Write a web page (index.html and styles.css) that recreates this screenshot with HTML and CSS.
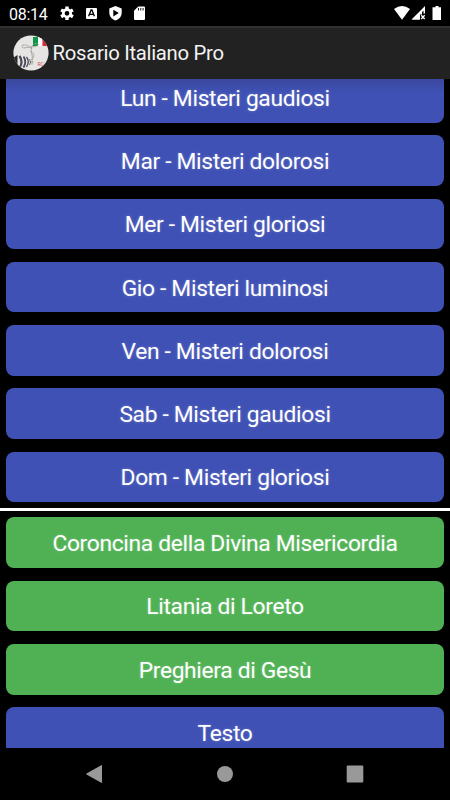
FILE: index.html
```html
<!DOCTYPE html>
<html lang="it">
<head>
    <meta charset="UTF-8">
    <meta name="viewport" content="width=device-width, initial-scale=1.0">
    <title>Rosario Italiano Pro</title>
    <link rel="stylesheet" href="styles.css">
</head>
<body>
    <div class="status-bar">
        <span class="clock">08:14</span>
        <svg class="status-icons" width="96" height="26" viewBox="0 0 96 26" fill="#fff">
            <!-- impostazioni -->
            <g transform="translate(12 13.3)">
                <circle r="3.7" fill="none" stroke="#fff" stroke-width="2.7"/>
                <g stroke="#fff" stroke-width="3.4">
                    <path d="M0-6.8V-4M0 6.8V4"/>
                    <path d="M0-6.8V-4M0 6.8V4" transform="rotate(60)"/>
                    <path d="M0-6.8V-4M0 6.8V4" transform="rotate(120)"/>
                </g>
            </g>
            <!-- tastiera -->
            <rect x="31" y="8" width="11" height="11" rx="1"/>
            <path d="M33.6 16.3L36.1 10h.8l2.5 6.3M34.6 14.3h3.8" fill="none" stroke="#000" stroke-width="1.3"/>
            <!-- protezione -->
            <path d="M60.5 6l6.2 2.5v4.3c0 3.5-2.5 6.5-6.2 7.7-3.7-1.2-6.2-4.2-6.2-7.7V8.5z"/>
            <path d="M58.3 9.7v6.8l5.5-3.4z" fill="#000"/>
            <!-- scheda sd -->
            <path d="M83.3 6.5H89q1 0 1 1V19q0 1-1 1h-9q-1 0-1-1v-8.3z"/>
            <path d="M83.5 8v2.5M85.8 8v2.5M88.1 8v2.5" stroke="#000" stroke-width=".9"/>
        </svg>
        <svg class="signal-icons" width="56" height="26" viewBox="0 0 56 26" fill="#fff">
            <path d="M0 9q8-6 16 0l-8 10.7z"/>
            <path d="M17.5 19.5L31 6v7.5h-1.5v-3L22.5 18h3v1.5z"/>
            <path d="M18 19.5l10-9.5v4.5h-2v5z"/>
            <path d="M27.2 15.3l3.5 3.7M30.7 15.3l-3.5 3.7" stroke="#fff" stroke-width="1.3"/>
            <path d="M41.5 6h3v1.3H47V20h-8.500V7.300h3z"/>
        </svg>
    </div>

    <header class="app-bar">
        <svg class="logo" width="36" height="36" viewBox="0 0 36 36">
            <defs>
                <clipPath id="disc"><circle cx="18" cy="18" r="17.6"/></clipPath>
            </defs>
            <g clip-path="url(#disc)">
                <rect width="36" height="36" fill="#e6e5e3"/>
                <path d="M20 2h5v9h-5z" fill="#0b984a"/>
                <path d="M25 2h4.5v9H25z" fill="#fff"/>
                <path d="M29.5 2H36v9h-6.5z" fill="#d52b38"/>
                <g fill="none" stroke="#99948c" stroke-width="1" stroke-dasharray="1.3 .5">
                    <path d="M19 14C15 9 8 9 9 12c1 2 6 0 9 0 4 0 9-2 7-3-2-2-7 1-7 6 0 4 2 4 1 10"/>
                    <path d="M18 16q5 4 1 8M17 27h4M19 24v6"/>
                </g>
                <path d="M0 23l4.5-3v14L0 31z" fill="#26272c"/>
                <g fill="none" stroke="#484b57">
                    <path d="M6.5 21q4 5.500 0 12" stroke-width="2.2"/>
                    <path d="M10.5 21.500q3.500 5 0 11" stroke-width="1.8"/>
                    <path d="M13.5 22q3.500 4.500 0 10" stroke-width="1.3"/>
                    <path d="M16.5 24q2 3 0 6" stroke-width=".8"/>
                </g>
                <text class="logo-mark" x="24.5" y="30.5">RC</text>
            </g>
        </svg>
        <h1 class="title">Rosario Italiano Pro</h1>
    </header>

    <main class="content">
        <div class="group group-days">
            <button class="btn">Lun - Misteri gaudiosi</button>
            <button class="btn">Mar - Misteri dolorosi</button>
            <button class="btn">Mer - Misteri gloriosi</button>
            <button class="btn">Gio - Misteri luminosi</button>
            <button class="btn">Ven - Misteri dolorosi</button>
            <button class="btn">Sab - Misteri gaudiosi</button>
            <button class="btn">Dom - Misteri gloriosi</button>
        </div>
        <div class="divider"></div>
        <div class="group">
            <button class="btn btn-green">Coroncina della Divina Misericordia</button>
            <button class="btn btn-green">Litania di Loreto</button>
            <button class="btn btn-green">Preghiera di Gesù</button>
            <button class="btn">Testo</button>
        </div>
    </main>

    <nav class="nav-bar">
        <svg width="18" height="20" viewBox="0 0 18 20" fill="#999"><path d="M16.2 1.2q.8-.4.8.5v16.6q0 .9-.8.5L1.5 10.5q-.7-.5 0-1z"/></svg>
        <svg width="18" height="20" viewBox="0 0 18 20" fill="#999"><circle cx="9" cy="10" r="8"/></svg>
        <svg width="18" height="20" viewBox="0 0 18 20" fill="#999"><rect x=".7" y="1.5" width="16.6" height="17" rx="1"/></svg>
    </nav>
</body>
</html>
```
FILE: styles.css
```css
* {
    box-sizing: border-box;
    margin: 0;
    padding: 0;
}

body {
    display: flex;
    flex-direction: column;
    height: 800px;
    overflow: hidden;
    background: #000;
    color: #fff;
    font-family: Roboto, sans-serif;
}

.status-bar {
    display: flex;
    flex: none;
    align-items: center;
    height: 26px;
    padding: 0 0 0 9px;
}

.clock {
    width: 46px;
    padding-top: 2px;
    font-size: 16px;
    letter-spacing: -0.3px;
}

.signal-icons {
    margin-left: auto;
}

.app-bar {
    display: flex;
    flex: none;
    align-items: center;
    gap: 4px;
    height: 53px;
    padding: 0 0 2px 12.5px;
    background: #222;
    border-top: 2px solid #303030;
}

.logo-mark {
    font-size: 5px;
    fill: #d8474f;
}

.title {
    font-size: 20.3px;
    font-weight: 400;
    letter-spacing: -0.28px;
    color: #f3f3f3;
}

.content {
    flex: none;
    height: 668.6px;
    overflow: hidden;
    background: #000;
}

.group {
    display: flex;
    flex-direction: column;
    gap: 12.7px;
    padding: 6.3px;
}

.group-days {
    margin-top: -7px;
    padding-top: 0;
    padding-bottom: 5.8px;
}

.btn {
    flex: none;
    height: 50.6px;
    padding-top: 2px;
    border: none;
    border-radius: 8px;
    background: #3f51b5;
    color: #fff;
    font-family: inherit;
    font-size: 22.8px;
    letter-spacing: -0.33px;
    text-shadow: 0 0 3px rgba(255,255,255,0.25);
}

/* ombra della barra sul primo pulsante */
.group-days .btn:first-child {
    background: linear-gradient(#3a479b 7px, #3f51b5 20px);
}

.btn-green {
    background: #4fb153;
}

.divider {
    height: 3px;
    background: #fff;
}

.nav-bar {
    display: flex;
    flex: 1;
    align-items: center;
    justify-content: space-between;
    padding: 0 86px 0 85px;
}
```
